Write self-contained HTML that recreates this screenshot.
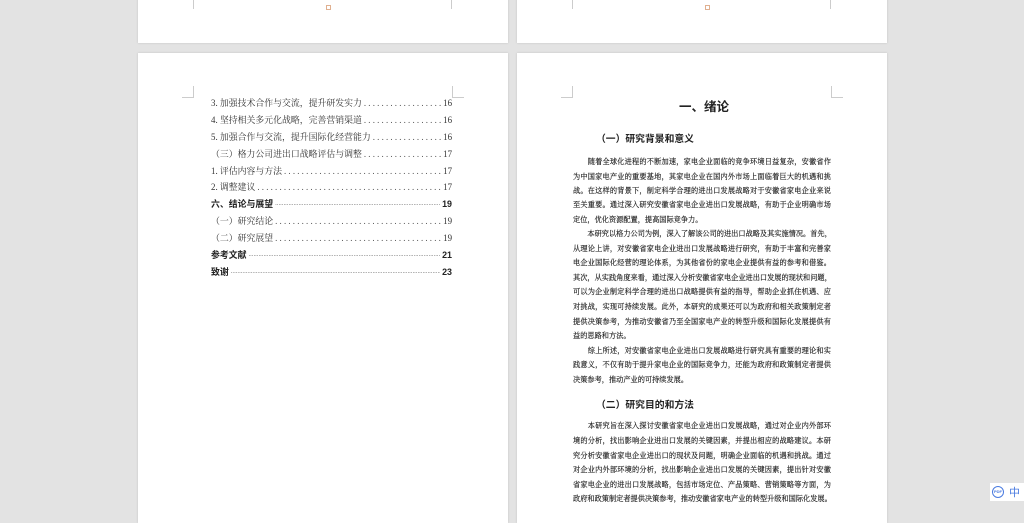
<!DOCTYPE html>
<html><head><meta charset="utf-8"><style>
body{margin:0;width:1024px;height:511px;background:#e3e3e3;position:relative;overflow:hidden;font-family:"Liberation Serif","Noto Serif CJK SC",serif;color:#333}
.pg{position:absolute;background:#fff;box-shadow:0 0 2px rgba(0,0,0,.15)}
.c{position:absolute;border-color:#ccc;border-style:solid;width:11px;height:11px}
.toc{position:absolute;left:211px;width:241px;font-size:8.9px;height:17px;line-height:17px;display:flex;white-space:nowrap}
.toc .d{flex:1;overflow:hidden;margin:0 2px;letter-spacing:2.2px;color:#555}
.toc.b{font-family:"Liberation Sans","Noto Sans CJK SC",sans-serif;font-weight:bold;color:#222}
.toc.b .d{letter-spacing:0;font-weight:normal;font-size:6px}
.l{position:absolute;left:573px;width:258px;font-size:7.2px;height:14.6px;line-height:14.6px;white-space:nowrap;text-align:justify;text-align-last:justify;overflow:hidden;color:#1a1a1a;-webkit-text-stroke:0.15px #1a1a1a}
.l.e{text-align-last:left}
.h{position:absolute;font-family:"Liberation Sans","Noto Sans CJK SC",sans-serif;font-weight:bold;color:#222;white-space:nowrap}
</style></head><body>
<div class="pg" style="left:138px;top:-5px;width:370px;height:48px"></div>
<div class="pg" style="left:517px;top:-5px;width:370px;height:48px"></div>
<div class="pg" style="left:138px;top:53px;width:370px;height:470px"></div>
<div class="pg" style="left:517px;top:53px;width:370px;height:470px"></div>
<div class="c" style="left:182px;top:0;border-width:0 1px 0 0;height:9px"></div>
<div class="c" style="left:451px;top:0;border-width:0 0 0 1px;height:9px"></div>
<div class="c" style="left:561px;top:0;border-width:0 1px 0 0;height:9px"></div>
<div class="c" style="left:830px;top:0;border-width:0 0 0 1px;height:9px"></div>
<div style="position:absolute;left:326px;top:5px;width:3px;height:3px;border:1px solid #e0b090"></div>
<div style="position:absolute;left:705px;top:5px;width:3px;height:3px;border:1px solid #e0b090"></div>
<div class="c" style="left:182px;top:86px;border-width:0 1px 1px 0"></div>
<div class="c" style="left:452px;top:86px;border-width:0 0 1px 1px"></div>
<div class="c" style="left:561px;top:86px;border-width:0 1px 1px 0"></div>
<div class="c" style="left:831px;top:86px;border-width:0 0 1px 1px"></div>

<div class="toc" style="top:95px"><span>3. 加强技术合作与交流，提升研发实力</span><span class="d">..........................................</span><span>16</span></div>
<div class="toc" style="top:112px"><span>4. 坚持相关多元化战略，完善营销渠道</span><span class="d">..........................................</span><span>16</span></div>
<div class="toc" style="top:129px"><span>5. 加强合作与交流，提升国际化经营能力</span><span class="d">..........................................</span><span>16</span></div>
<div class="toc" style="top:146px"><span>（三）格力公司进出口战略评估与调整</span><span class="d">..........................................</span><span>17</span></div>
<div class="toc" style="top:163px"><span>1. 评估内容与方法</span><span class="d">..............................................................................</span><span>17</span></div>
<div class="toc" style="top:179px"><span>2. 调整建议</span><span class="d">..............................................................................</span><span>17</span></div>
<div class="toc b" style="top:196px"><span>六、结论与展望</span><span class="d">................................................................................................................</span><span>19</span></div>
<div class="toc" style="top:213px"><span>（一）研究结论</span><span class="d">..............................................................................</span><span>19</span></div>
<div class="toc" style="top:230px"><span>（二）研究展望</span><span class="d">..............................................................................</span><span>19</span></div>
<div class="toc b" style="top:247px"><span>参考文献</span><span class="d">................................................................................................................................</span><span>21</span></div>
<div class="toc b" style="top:264px"><span>致谢</span><span class="d">................................................................................................................................</span><span>23</span></div>

<div class="h" style="left:679px;top:96px;font-size:12.5px">一、绪论</div>
<div class="h" style="left:596px;top:131px;font-size:9.8px">（一）研究背景和意义</div>
<div class="l" style="top:155px">　　随着全球化进程的不断加速，家电企业面临的竞争环境日益复杂，安徽省作</div>
<div class="l" style="top:170px">为中国家电产业的重要基地，其家电企业在国内外市场上面临着巨大的机遇和挑</div>
<div class="l" style="top:184px">战。在这样的背景下，制定科学合理的进出口发展战略对于安徽省家电企业来说</div>
<div class="l" style="top:198px">至关重要。通过深入研究安徽省家电企业进出口发展战略，有助于企业明确市场</div>
<div class="l e" style="top:213px">定位，优化资源配置，提高国际竞争力。</div>
<div class="l" style="top:227px">　　本研究以格力公司为例，深入了解该公司的进出口战略及其实施情况。首先，</div>
<div class="l" style="top:242px">从理论上讲，对安徽省家电企业进出口发展战略进行研究，有助于丰富和完善家</div>
<div class="l" style="top:256px">电企业国际化经营的理论体系，为其他省份的家电企业提供有益的参考和借鉴。</div>
<div class="l" style="top:271px">其次，从实践角度来看，通过深入分析安徽省家电企业进出口发展的现状和问题，</div>
<div class="l" style="top:285px">可以为企业制定科学合理的进出口战略提供有益的指导，帮助企业抓住机遇、应</div>
<div class="l" style="top:300px">对挑战，实现可持续发展。此外，本研究的成果还可以为政府和相关政策制定者</div>
<div class="l" style="top:315px">提供决策参考，为推动安徽省乃至全国家电产业的转型升级和国际化发展提供有</div>
<div class="l e" style="top:329px">益的思路和方法。</div>
<div class="l" style="top:344px">　　综上所述，对安徽省家电企业进出口发展战略进行研究具有重要的理论和实</div>
<div class="l" style="top:358px">践意义，不仅有助于提升家电企业的国际竞争力，还能为政府和政策制定者提供</div>
<div class="l e" style="top:373px">决策参考，推动产业的可持续发展。</div>
<div class="h" style="left:596px;top:397px;font-size:9.8px">（二）研究目的和方法</div>
<div class="l" style="top:419px">　　本研究旨在深入探讨安徽省家电企业进出口发展战略，通过对企业内外部环</div>
<div class="l" style="top:434px">境的分析，找出影响企业进出口发展的关键因素，并提出相应的战略建议。本研</div>
<div class="l" style="top:449px">究分析安徽省家电企业进出口的现状及问题，明确企业面临的机遇和挑战。通过</div>
<div class="l" style="top:463px">对企业内外部环境的分析，找出影响企业进出口发展的关键因素，提出针对安徽</div>
<div class="l" style="top:478px">省家电企业的进出口发展战略，包括市场定位、产品策略、营销策略等方面，为</div>
<div class="l" style="top:492px">政府和政策制定者提供决策参考，推动安徽省家电产业的转型升级和国际化发展。</div>

<div style="position:absolute;left:990px;top:483px;width:40px;height:18px;background:#fff"></div>
<div style="position:absolute;left:992px;top:486px;width:10px;height:10px;border:1.5px solid #4a7be0;border-radius:50%;font:bold 4px 'Liberation Sans',sans-serif;color:#4a7be0;text-align:center;line-height:10px">PDF</div>
<div style="position:absolute;left:1009px;top:484px;font:11px 'Liberation Sans','Noto Sans CJK SC',sans-serif;color:#4a7be0">中</div>
</body></html>
